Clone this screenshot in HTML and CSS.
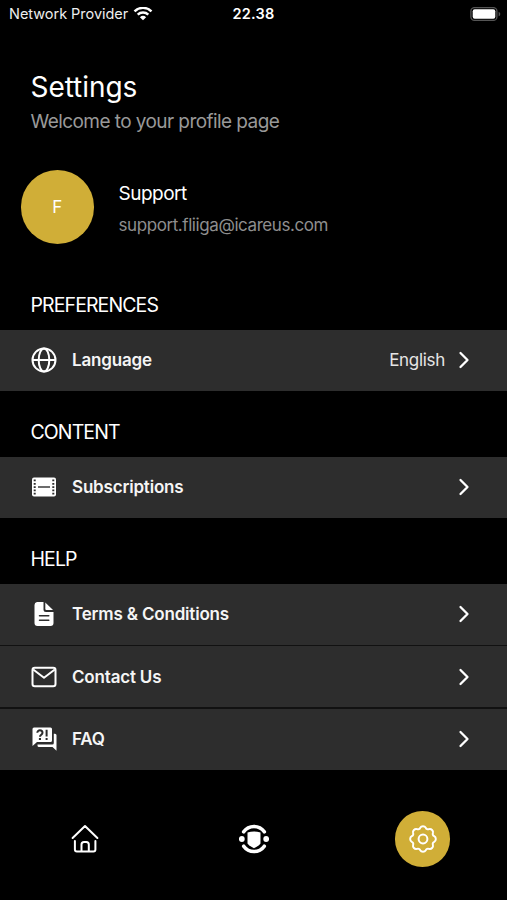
FILE: index.html
```html
<!DOCTYPE html>
<html lang="en">
<head>
<meta charset="utf-8">
<title>Settings</title>
<link rel="stylesheet" href="styles.css">
</head>
<body>
<header class="status">
  <div class="carrier"><span class="carrier-name">Network Provider</span>
    <svg class="wifi" width="20" height="15" viewBox="0 0 20 15" fill="none" stroke="#fff" stroke-width="2.4"><path d="M1.500 4.300a12.200 12.200 0 0 1 17 0M4.700 7.700a7.600 7.600 0 0 1 10.600 0"/><path d="M10 13.200 6.900 10.200a4.500 4.500 0 0 1 6.200 0z" fill="#fff" stroke="none"/></svg>
  </div>
  <span class="clock">22.38</span>
  <svg class="battery" width="31" height="15" viewBox="0 0 31 15"><rect x=".9" y=".6" width="26" height="12.800" rx="3.500" fill="none" stroke="#555" stroke-width="1.300"/><rect x="2.700" y="2.300" width="22.600" height="9.400" rx="2" fill="#fff"/><path d="M28.600 4.700v4.600c2.200-.8 2.200-3.800 0-4.600z" fill="#555"/></svg>
</header>
<main>
  <div class="heading">
    <h1>Settings</h1>
    <p>Welcome to your profile page</p>
  </div>
  <section class="profile">
    <div class="avatar">F</div>
    <div class="person"><div class="name">Support</div><div class="email">support.fliiga@icareus.com</div></div>
  </section>

  <section class="group">
    <h2>PREFERENCES</h2>
    <div class="rows">
      <a class="row"><svg class="icon" viewBox="0 0 26 26" fill="none" stroke="#fff" stroke-width="2"><circle cx="13" cy="13" r="11.500"/><ellipse cx="13" cy="13" rx="5.300" ry="11.500"/><path d="M1.500 13h23"/></svg><span class="label">Language</span><span class="value">English</span><svg class="chevron" viewBox="0 0 12 18"><path d="m2.500 2 7 7-7 7"/></svg></a>
    </div>
  </section>

  <section class="group">
    <h2>CONTENT</h2>
    <div class="rows">
      <a class="row"><svg class="icon" viewBox="0 0 26 26"><rect x="1" y="3.500" width="24" height="19" rx="2" fill="#fff"/><g fill="#2d2d2d"><path d="M7 12.300h12v1.400H7z"/><path d="M2.700 5.500h2v1.700h-2zM2.700 9h2v1.700h-2zM2.700 12.200h2v1.700h-2zM2.700 15.500h2v1.700h-2zM2.700 18.800h2v1.700h-2zM21.300 5.500h2v1.700h-2zM21.300 9h2v1.700h-2zM21.300 12.200h2v1.700h-2zM21.300 15.500h2v1.700h-2zM21.300 18.800h2v1.700h-2z"/></g></svg><span class="label">Subscriptions</span><svg class="chevron" viewBox="0 0 12 18"><path d="m2.500 2 7 7-7 7"/></svg></a>
    </div>
  </section>

  <section class="group">
    <h2>HELP</h2>
    <div class="rows">
      <a class="row"><svg class="icon" viewBox="0 0 26 26"><path d="M6 1h6.500v7.500a2.500 2.500 0 0 0 2.500 2.500h7.500v11a3 3 0 0 1-3 3H6.500a3 3 0 0 1-3-3V4A3 3 0 0 1 6 1z" fill="#fff"/><path d="M14.300 1.500v6.500a1 1 0 0 0 1 1h6.700z" fill="#fff"/><path d="M8.500 14.800h9.300M8.500 19.200h9.300" stroke="#2d2d2d" stroke-width="1.500" stroke-linecap="round"/></svg><span class="label">Terms &amp; Conditions</span><svg class="chevron" viewBox="0 0 12 18"><path d="m2.500 2 7 7-7 7"/></svg></a>
      <a class="row"><svg class="icon" viewBox="0 0 26 26" fill="none" stroke="#fff" stroke-width="2" stroke-linejoin="round"><rect x="1.500" y="3.700" width="23" height="18.600" rx="2.300"/><path d="m2.200 5.500 10.800 8.300 10.800-8.300"/></svg><span class="label">Contact Us</span><svg class="chevron" viewBox="0 0 12 18"><path d="m2.500 2 7 7-7 7"/></svg></a>
      <a class="row"><svg class="icon" viewBox="0 0 26 26"><path d="M3 1.500h16.500A1.500 1.500 0 0 1 21 3v11.500a1.500 1.500 0 0 1-1.500 1.500H6l-4.500 4V3A1.500 1.500 0 0 1 3 1.500z" fill="#fff"/><path d="M22.800 7.700h1.200a1.500 1.500 0 0 1 1.500 1.500v15.500L21.500 21H8a1.500 1.500 0 0 1-1.500-1.500v-1h14.800a1.500 1.500 0 0 0 1.500-1.500z" fill="#fff"/><path d="M6.300 6.700c0-3.200 5.200-3.200 5.200.1 0 2-2.500 1.900-2.500 4M15.600 3.800v6.800" fill="none" stroke="#2d2d2d" stroke-width="2"/><path d="M7.900 12h2.100v2H7.900zM14.600 12h2v2h-2z" fill="#2d2d2d"/></svg><span class="label">FAQ</span><svg class="chevron" viewBox="0 0 12 18"><path d="m2.500 2 7 7-7 7"/></svg></a>
    </div>
  </section>
</main>
<nav class="tabs">
  <a class="tab"><svg width="30" height="30" viewBox="0 0 30 30" fill="none" stroke="#fff" stroke-width="2" stroke-linecap="round" stroke-linejoin="round"><path d="M2.600 14 15 2l12.400 12M4.900 17v8.500a2 2 0 0 0 2 2h16.500a2 2 0 0 0 2-2V17M11.500 27.500v-7a2.500 2.500 0 0 1 2.500-2.500h2.300a2.500 2.500 0 0 1 2.500 2.500v7"/></svg></a>
  <a class="tab"><svg width="30" height="30" viewBox="-15 -15 30 30"><g fill="none" stroke="#fff" stroke-width="3.600" stroke-linecap="round"><path d="M-10.300-7.200a12.600 12.600 0 0 1 20.600 0M-10.300 7.200a12.600 12.600 0 0 0 20.600 0"/></g><circle cx="-12.200" cy="0" r="2.900" fill="#fff"/><circle cx="12.200" cy="0" r="2.900" fill="#fff"/><path d="M-6.500-6.500Q0-8.500 6.500-6.500V4.500Q6 6 0 9.200-6 6-6.500 4.500z" fill="#fff"/></svg></a>
  <a class="tab"><span class="active"><svg width="30" height="30" viewBox="-15 -15 30 30" fill="none" stroke="#fff" stroke-width="2" stroke-linejoin="round"><circle r="4.400"/><path transform="scale(.98)" d="M-2.850-11.450A3.300 3.300 0 0 1 2.850-11.450A2.400 2.400 0 0 0 6.080-10.110A3.300 3.300 0 0 1 10.110-6.080A2.400 2.400 0 0 0 11.450-2.850A3.300 3.300 0 0 1 11.450 2.850A2.400 2.400 0 0 0 10.110 6.080A3.300 3.300 0 0 1 6.080 10.110A2.400 2.400 0 0 0 2.850 11.450A3.300 3.300 0 0 1-2.850 11.450A2.400 2.400 0 0 0-6.080 10.110A3.300 3.300 0 0 1-10.110 6.080A2.400 2.400 0 0 0-11.450 2.850A3.300 3.300 0 0 1-11.450-2.850A2.400 2.400 0 0 0-10.110-6.080A3.300 3.300 0 0 1-6.080-10.110A2.400 2.400 0 0 0-2.850-11.450z"/></svg></span></a>
</nav>
</body>
</html>
```
FILE: styles.css
```css
* { box-sizing: border-box; }
body {
  margin: 0;
  height: 900px;
  display: flex;
  flex-direction: column;
  overflow: hidden;
  background: #000;
  color: #fff;
  font-family: Inter, "Liberation Sans", sans-serif;
  white-space: nowrap;
}
h1, h2, p { margin: 0; font-weight: 400; }
svg { display: block; flex: none; }
.status {
  display: grid;
  grid-template-columns: 1fr auto 1fr;
  align-items: center;
  height: 28px;
  padding: 0 6px 0 9px;
}
.carrier { display: flex; align-items: center; gap: 5px; }
.carrier-name { font-size: 14.500px; line-height: 20px; letter-spacing: -.03px; color: #eee; }
.clock { font-size: 14.500px; font-weight: 600; line-height: 20px; letter-spacing: .2px; margin-right: 3px; }
.battery { justify-self: end; }
.heading { padding: 41px 30.500px 0; }
h1 { font-size: 28px; line-height: 36px; letter-spacing: -.05px; }
.heading p { margin-top: 5px; font-size: 19px; line-height: 24px; color: #999; letter-spacing: -.57px; }
.profile { display: flex; align-items: center; gap: 24.500px; height: 74px; margin-top: 36px; padding-left: 20.500px; }
.avatar {
  width: 73.500px;
  height: 73.500px;
  border-radius: 50%;
  display: grid;
  place-items: center;
  background: #d0ae37;
  font-size: 17px;
}
.person { padding-top: 4px; }
.name { font-size: 19px; line-height: 24px; letter-spacing: -.5px; }
.email { margin-top: 8px; font-size: 17px; line-height: 22px; letter-spacing: -.42px; color: #8e8e8e; }
.group { margin-top: 18px; }
.profile + .group { margin-top: 37.500px; }
.group h2 {
  height: 48px;
  padding: 11.500px 30.500px 0;
  font-size: 19.500px;
  line-height: 24px;
  letter-spacing: -.9px;
}
.rows { display: flex; flex-direction: column; gap: 1.500px; background: #111; }
.row {
  display: flex;
  align-items: center;
  height: 61px;
  padding: 0 37.500px 0 31px;
  background: #2d2d2d;
}
.icon { width: 26px; height: 26px; margin: 0 15.500px 0 -.5px; }
.label { flex: 1; font-size: 17px; font-weight: 600; letter-spacing: -.18px; color: #f5f5f5; }
.value { margin-right: 12.500px; font-size: 17px; letter-spacing: -.3px; color: #e5e5e5; }
.chevron { width: 12px; height: 18px; fill: none; stroke: #fff; stroke-width: 2.300; stroke-linecap: round; stroke-linejoin: round; }
.tabs { display: grid; grid-template-columns: repeat(3, 1fr); margin-top: 41.500px; }
.tab { display: grid; place-items: center; height: 56px; }
.active {
  width: 55.500px;
  height: 55.500px;
  border-radius: 50%;
  display: grid;
  place-items: center;
  background: #d0ae37;
}
```
